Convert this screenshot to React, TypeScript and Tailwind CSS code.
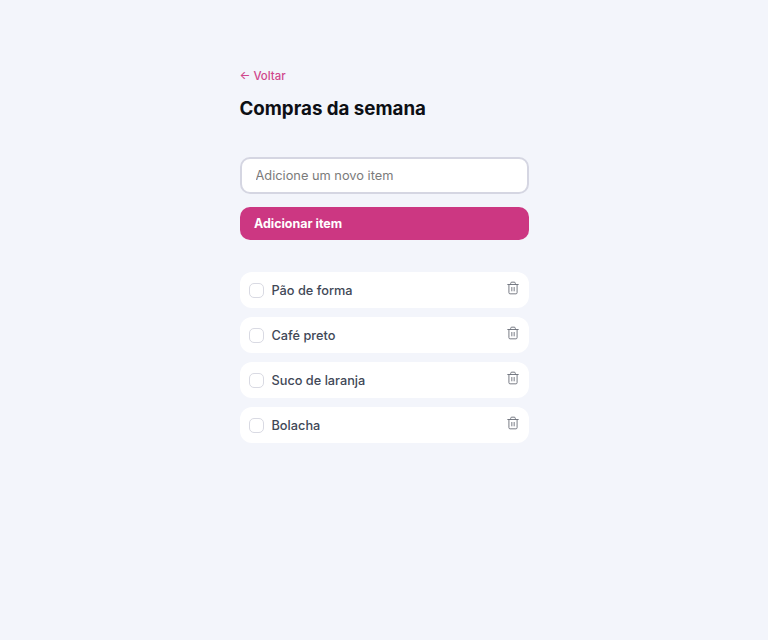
import { Trash2 } from "lucide-react";

const items = ["Pão de forma", "Café preto", "Suco de laranja", "Bolacha"];

export default function App() {
  return (
    <div className="min-h-screen bg-[#f3f5fb] pt-[69px] font-['Inter',sans-serif]">
      <div className="mx-auto w-[289px]">
        <a className="block text-[11.4px] font-medium leading-[14px] text-[#d0478c]">← Voltar</a>
        <h1 className="mt-[12px] text-[18.72px] font-bold leading-7 text-[#0d0f14]">Compras da semana</h1>

        <input
          placeholder="Adicione um novo item"
          className="mt-[34px] block h-[37px] w-full rounded-[10px] border-2 border-[#d5d6e2] bg-white px-[14px] text-[12.8px] text-gray-700 outline-none placeholder:text-[#7b7b7b]"
        />
        <button className="mt-[13px] block h-[33px] w-full rounded-[10px] bg-[#cc3782] px-[14.4px] pt-px text-left text-[12.48px] font-bold text-white">
          Adicionar item
        </button>

        <ul className="mt-8 flex flex-col gap-[9px]">
          {items.map((item) => (
            <li key={item} className="flex h-9 items-center rounded-xl bg-white px-[9px]">
              <span className="h-[15px] w-[15px] rounded-[5px] border border-[#d9dae3] bg-white" />
              <span className="ml-2 flex-1 pt-px text-[12.75px] font-medium leading-5 text-[#414857]">{item}</span>
              <Trash2 size={14} strokeWidth={1.6} className="mb-[5px] text-[#6f737d]" />
            </li>
          ))}
        </ul>
      </div>
    </div>
  );
}
